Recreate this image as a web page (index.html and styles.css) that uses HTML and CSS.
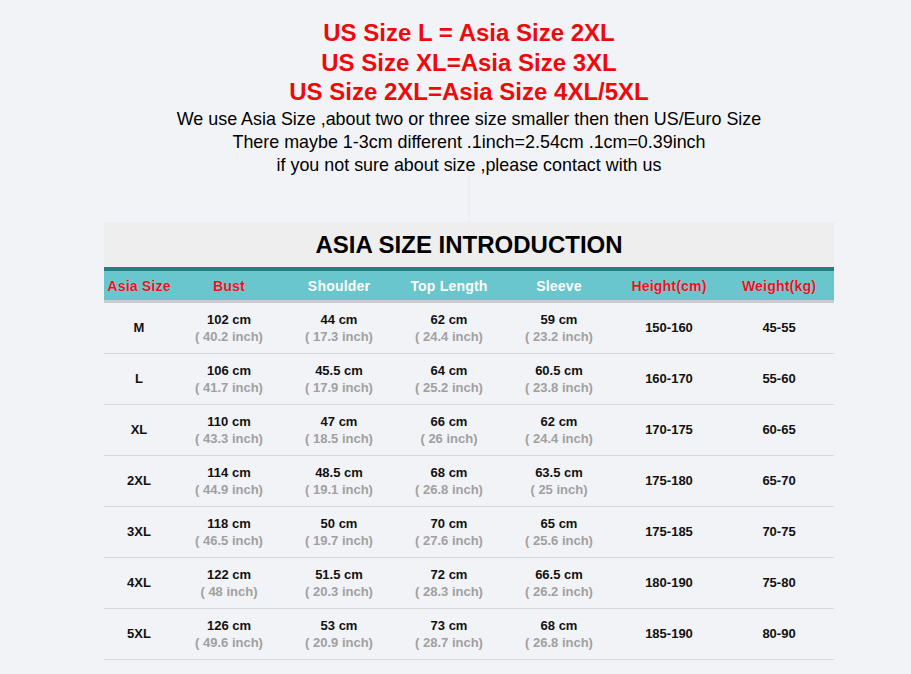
FILE: index.html
```html
<!DOCTYPE html>
<html>
<head>
<meta charset="utf-8">
<link rel="stylesheet" href="styles.css">
</head>
<body>
<div class="page">
  <div class="intro">
    <p class="red">US Size L = Asia Size 2XL</p>
    <p class="red">US Size XL=Asia Size 3XL</p>
    <p class="red">US Size 2XL=Asia Size 4XL/5XL</p>
    <p class="note">We use Asia Size ,about two or three size smaller then then US/Euro Size</p>
    <p class="note">There maybe 1-3cm different .1inch=2.54cm .1cm=0.39inch</p>
    <p class="note">if you not sure about size ,please contact with us</p>
  </div>
  <div class="divider"></div>
  <div class="chart">
    <div class="title">ASIA SIZE INTRODUCTION</div>
    <div class="head">
      <div class="hc hred">Asia Size</div>
      <div class="hc hred">Bust</div>
      <div class="hc">Shoulder</div>
      <div class="hc">Top Length</div>
      <div class="hc">Sleeve</div>
      <div class="hc hred">Height(cm)</div>
      <div class="hc hred">Weight(kg)</div>
    </div>
    <div class="row">
      <div class="c">M</div>
      <div class="c"><span>102 cm</span><span class="in">( 40.2 inch)</span></div>
      <div class="c"><span>44 cm</span><span class="in">( 17.3 inch)</span></div>
      <div class="c"><span>62 cm</span><span class="in">( 24.4 inch)</span></div>
      <div class="c"><span>59 cm</span><span class="in">( 23.2 inch)</span></div>
      <div class="c">150-160</div>
      <div class="c">45-55</div>
    </div>
    <div class="row">
      <div class="c">L</div>
      <div class="c"><span>106 cm</span><span class="in">( 41.7 inch)</span></div>
      <div class="c"><span>45.5 cm</span><span class="in">( 17.9 inch)</span></div>
      <div class="c"><span>64 cm</span><span class="in">( 25.2 inch)</span></div>
      <div class="c"><span>60.5 cm</span><span class="in">( 23.8 inch)</span></div>
      <div class="c">160-170</div>
      <div class="c">55-60</div>
    </div>
    <div class="row">
      <div class="c">XL</div>
      <div class="c"><span>110 cm</span><span class="in">( 43.3 inch)</span></div>
      <div class="c"><span>47 cm</span><span class="in">( 18.5 inch)</span></div>
      <div class="c"><span>66 cm</span><span class="in">( 26 inch)</span></div>
      <div class="c"><span>62 cm</span><span class="in">( 24.4 inch)</span></div>
      <div class="c">170-175</div>
      <div class="c">60-65</div>
    </div>
    <div class="row">
      <div class="c">2XL</div>
      <div class="c"><span>114 cm</span><span class="in">( 44.9 inch)</span></div>
      <div class="c"><span>48.5 cm</span><span class="in">( 19.1 inch)</span></div>
      <div class="c"><span>68 cm</span><span class="in">( 26.8 inch)</span></div>
      <div class="c"><span>63.5 cm</span><span class="in">( 25 inch)</span></div>
      <div class="c">175-180</div>
      <div class="c">65-70</div>
    </div>
    <div class="row">
      <div class="c">3XL</div>
      <div class="c"><span>118 cm</span><span class="in">( 46.5 inch)</span></div>
      <div class="c"><span>50 cm</span><span class="in">( 19.7 inch)</span></div>
      <div class="c"><span>70 cm</span><span class="in">( 27.6 inch)</span></div>
      <div class="c"><span>65 cm</span><span class="in">( 25.6 inch)</span></div>
      <div class="c">175-185</div>
      <div class="c">70-75</div>
    </div>
    <div class="row">
      <div class="c">4XL</div>
      <div class="c"><span>122 cm</span><span class="in">( 48 inch)</span></div>
      <div class="c"><span>51.5 cm</span><span class="in">( 20.3 inch)</span></div>
      <div class="c"><span>72 cm</span><span class="in">( 28.3 inch)</span></div>
      <div class="c"><span>66.5 cm</span><span class="in">( 26.2 inch)</span></div>
      <div class="c">180-190</div>
      <div class="c">75-80</div>
    </div>
    <div class="row">
      <div class="c">5XL</div>
      <div class="c"><span>126 cm</span><span class="in">( 49.6 inch)</span></div>
      <div class="c"><span>53 cm</span><span class="in">( 20.9 inch)</span></div>
      <div class="c"><span>73 cm</span><span class="in">( 28.7 inch)</span></div>
      <div class="c"><span>68 cm</span><span class="in">( 26.8 inch)</span></div>
      <div class="c">185-190</div>
      <div class="c">80-90</div>
    </div>
  </div>
</div>
</body>
</html>
```
FILE: styles.css
```css
html, body {
  margin: 0;
  padding: 0;
  background: #f2f3f7;
}
body {
  font-family: "Liberation Sans", Arial, sans-serif;
  color: #000;
  width: 911px;
  height: 674px;
  overflow: hidden;
}
.page {
  display: flex;
  flex-direction: column;
  align-items: center;
}
.intro {
  width: 911px;
  padding-left: 27px;
  box-sizing: border-box;
  padding-top: 18px;
  text-align: center;
}
.intro p {
  margin: 0;
}
.red {
  color: #ee0a0a;
  font-weight: bold;
  font-size: 24px;
  line-height: 29.5px;
}
.note {
  font-size: 17.9px;
  line-height: 23px;
  color: #000;
  position: relative;
  top: 1px;
}
.divider {
  width: 2px;
  height: 46px;
  margin-left: 27px;
  background: #eceef2;
}
.chart {
  width: 730px;
  margin-left: 27px;
  display: flex;
  flex-direction: column;
}
.title {
  height: 45px;
  background: #eeeeee;
  font-weight: bold;
  font-size: 24px;
  line-height: 46px;
  text-align: center;
}
.head {
  display: grid;
  grid-template-columns: 70px repeat(6, 110px);
  height: 29px;
  background: #68c6cc;
  border-top: 4px solid #23807f;
  border-bottom: 3px solid #c9cdd0;
}
.hc {
  display: flex;
  align-items: center;
  justify-content: center;
  font-weight: bold;
  font-size: 14px;
  letter-spacing: 0.2px;
  color: #fff;
  padding-top: 1px;
}
.hred {
  color: #e5101d;
  text-shadow: 0 0 1px rgba(255, 255, 255, 0.6);
}
.row {
  display: grid;
  grid-template-columns: 70px repeat(6, 110px);
  height: 50px;
  border-bottom: 1px solid #d4d6da;
}
.c {
  display: flex;
  flex-direction: column;
  align-items: center;
  justify-content: center;
  font-weight: bold;
  font-size: 13px;
  line-height: 17px;
  color: #111;
}
.in {
  color: #a0a0a0;
}
```
